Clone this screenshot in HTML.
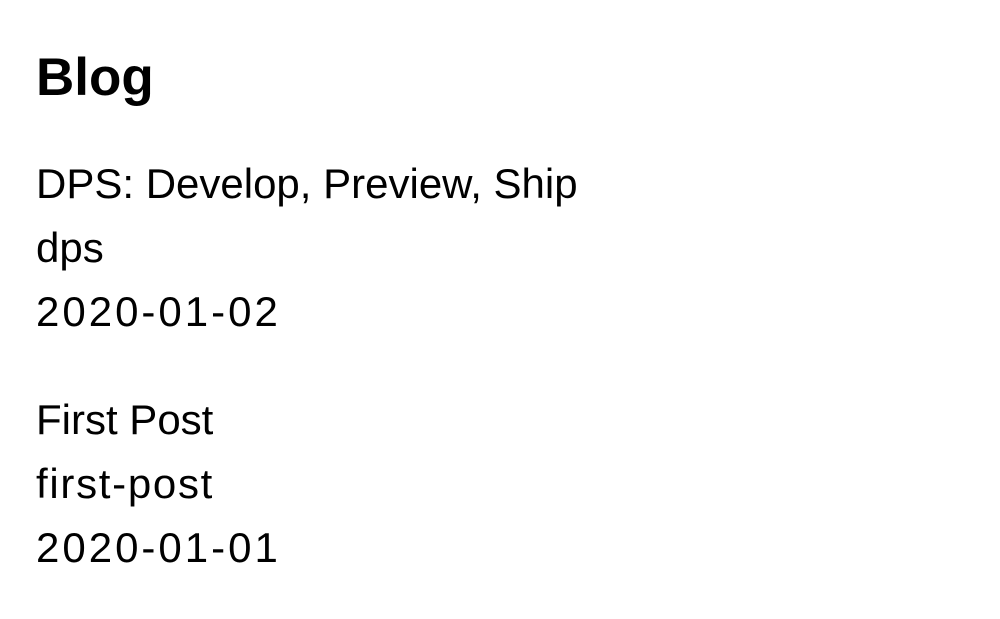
<!DOCTYPE html>
<html><head><style>
body{margin:0;background:#fff;font-family:"Liberation Sans",Arial,sans-serif;color:#000;width:1000px;height:619px;overflow:hidden;position:relative}
h1{position:absolute;left:36px;top:48px;margin:0;font-size:53px;line-height:60px;font-weight:bold}
.g{position:absolute;left:36px;font-size:42px;line-height:64px}
.d{letter-spacing:3px}
.s{letter-spacing:1.7px}
</style></head><body>
<h1>Blog</h1>
<div class="g" style="top:152px">DPS: Develop, Preview, Ship<br>dps<br><span class="d">2020-01-02</span></div>
<div class="g" style="top:388px">First Post<br><span class="s">first-post</span><br><span class="d">2020-01-01</span></div>
</body></html>
